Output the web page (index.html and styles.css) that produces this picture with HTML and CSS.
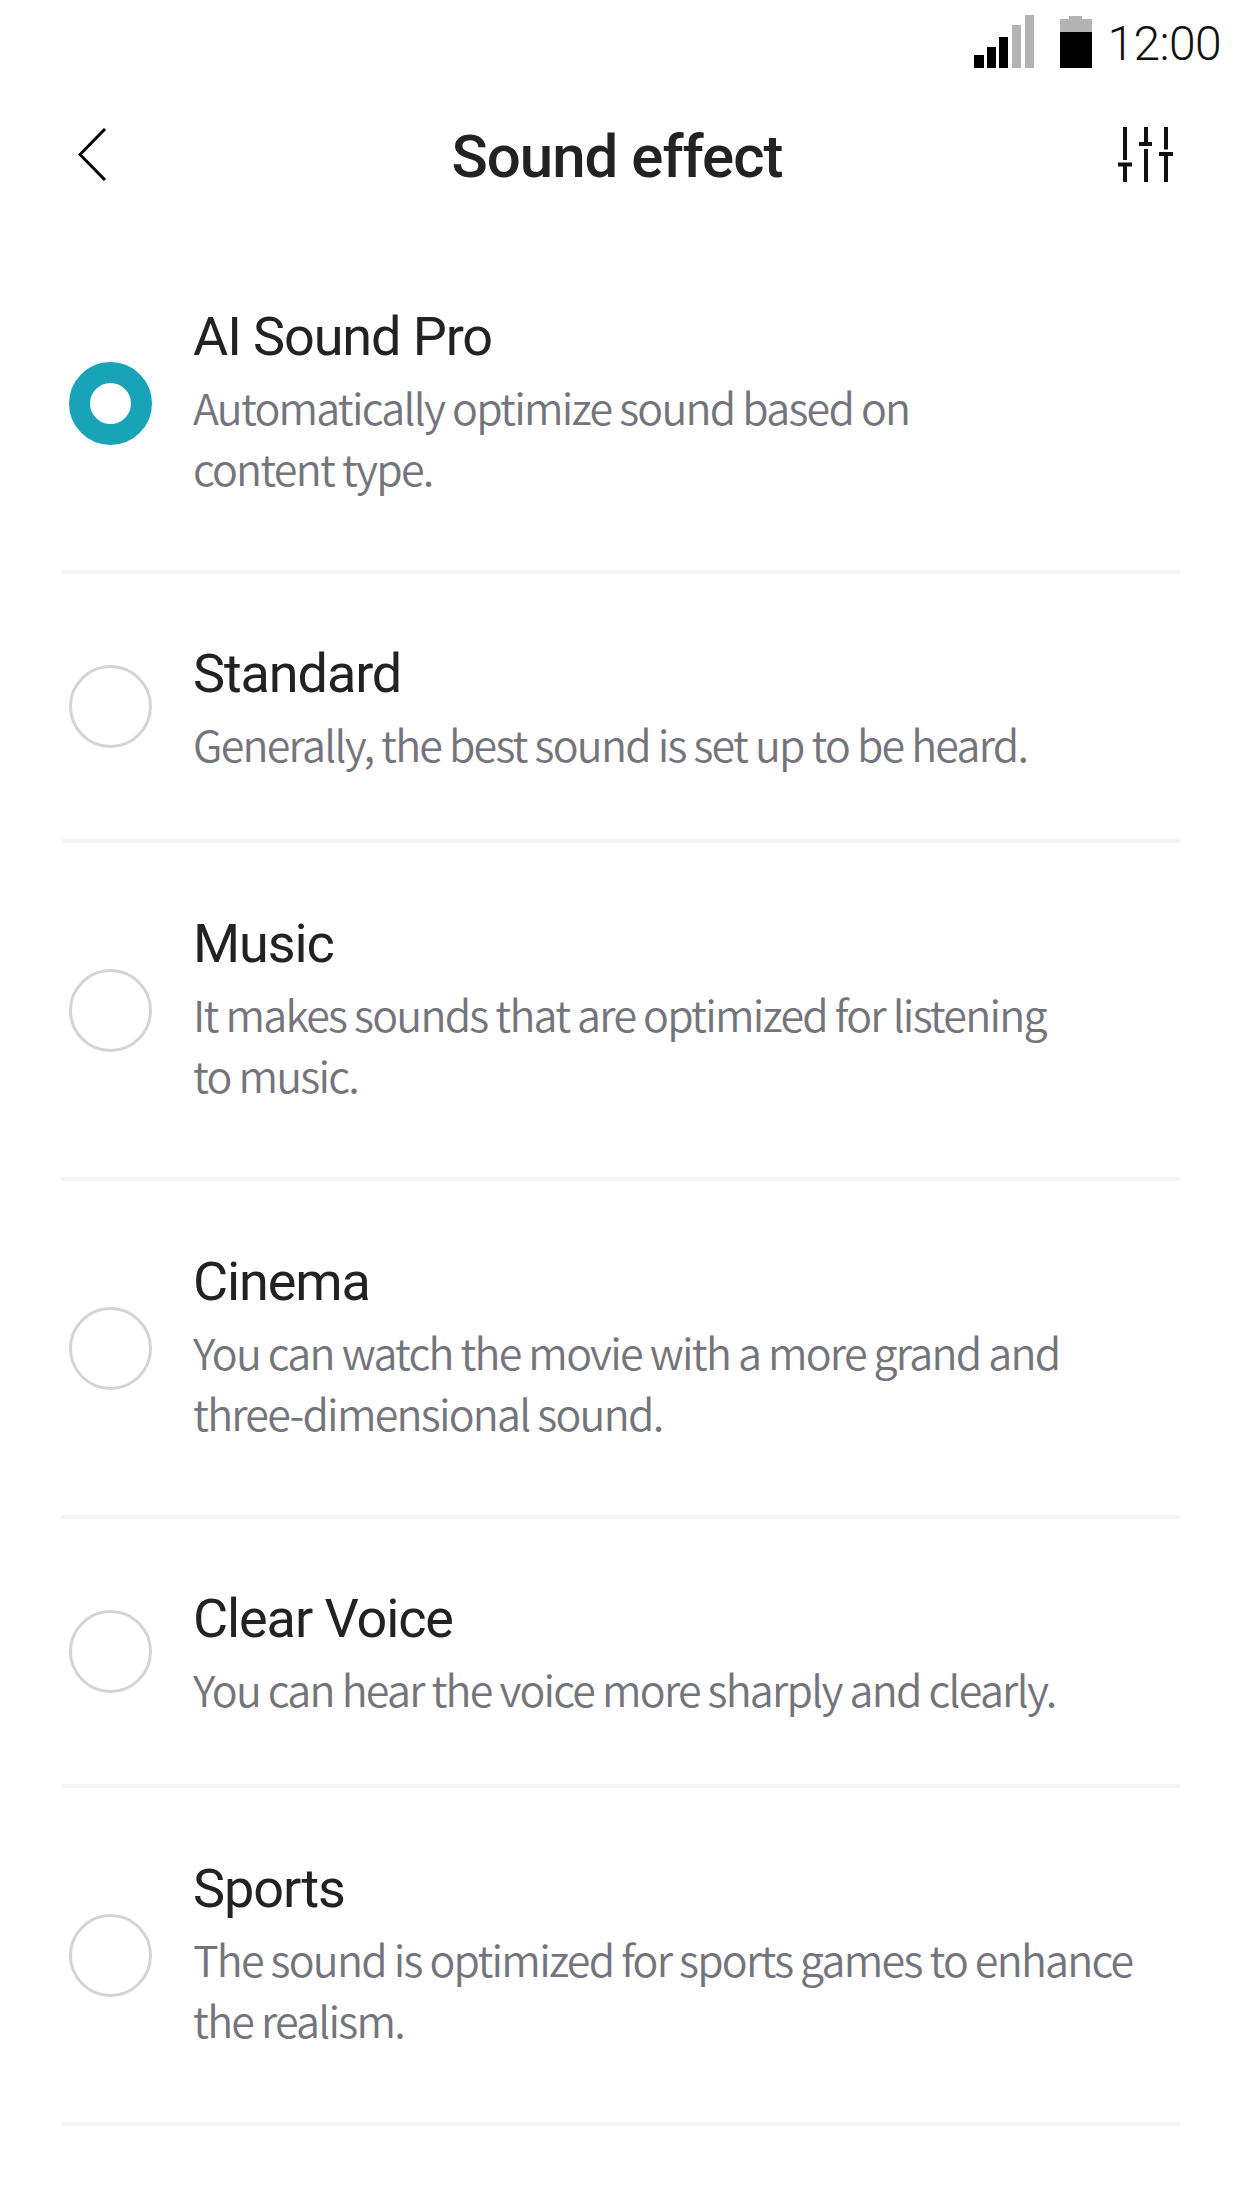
FILE: index.html
```html
<!DOCTYPE html>
<html lang="en">
<head>
    <meta charset="UTF-8">
    <meta name="viewport" content="width=device-width, initial-scale=1.0">
    <title>Sound effect</title>
    <link rel="stylesheet" href="styles.css">
</head>
<body>
    <div class="status-bar">
        <svg class="signal-icon" width="60" height="53" viewBox="0 0 60 53">
            <rect x="0" y="40" width="10" height="13" fill="#000"/>
            <rect x="13" y="32" width="9" height="21" fill="#000"/>
            <rect x="25" y="22" width="9" height="31" fill="#000"/>
            <rect x="38" y="10" width="9" height="43" fill="#b3b3b3"/>
            <rect x="51" y="0" width="9" height="53" fill="#b3b3b3"/>
        </svg>
        <svg class="battery-icon" width="32" height="52" viewBox="0 0 32 52">
            <rect x="9" y="0" width="13" height="4" fill="#b3b3b3"/>
            <rect x="0" y="3" width="32" height="14" fill="#b3b3b3"/>
            <rect x="0" y="16" width="32" height="36" fill="#000"/>
        </svg>
        <span class="clock">12:00</span>
    </div>

    <div class="header">
        <svg class="back-icon" width="29" height="53" viewBox="0 0 29 53">
            <path d="M27 1 L2 26.5 L27 52" fill="none" stroke="#000" stroke-width="3"/>
        </svg>
        <h1>Sound effect</h1>
        <svg class="eq-icon" width="55" height="55" viewBox="0 0 55 55">
            <path d="M7 0V33M0 37.5H14M7 37.5V55M28 0V17M21 17H34M28 22V55M48 0V22.5M41 27H55M48 27V55" fill="none" stroke="#111" stroke-width="4"/>
        </svg>
    </div>

    <div class="list">
        <div class="row two-line">
            <div class="radio selected"></div>
            <div class="row-text">
                <div class="row-title">AI Sound Pro</div>
                <div class="row-desc">Automatically optimize sound based on<br>content type.</div>
            </div>
        </div>
        <div class="row">
            <div class="radio"></div>
            <div class="row-text">
                <div class="row-title">Standard</div>
                <div class="row-desc">Generally, the best sound is set up to be heard.</div>
            </div>
        </div>
        <div class="row two-line">
            <div class="radio"></div>
            <div class="row-text">
                <div class="row-title">Music</div>
                <div class="row-desc">It makes sounds that are optimized for listening<br>to music.</div>
            </div>
        </div>
        <div class="row two-line">
            <div class="radio"></div>
            <div class="row-text">
                <div class="row-title">Cinema</div>
                <div class="row-desc">You can watch the movie with a more grand and<br>three-dimensional sound.</div>
            </div>
        </div>
        <div class="row">
            <div class="radio"></div>
            <div class="row-text">
                <div class="row-title">Clear Voice</div>
                <div class="row-desc">You can hear the voice more sharply and clearly.</div>
            </div>
        </div>
        <div class="row two-line">
            <div class="radio"></div>
            <div class="row-text">
                <div class="row-title">Sports</div>
                <div class="row-desc">The sound is optimized for sports games to enhance<br>the realism.</div>
            </div>
        </div>
    </div>
</body>
</html>
```

FILE: styles.css
```css
body {
    margin: 0;
    background-color: #fff;
    font-family: Roboto, sans-serif;
    color: #222;
}
.status-bar {
    display: flex;
    justify-content: flex-end;
    align-items: flex-end;
    height: 68px;
    padding-right: 21px;
}
.signal-icon {
    margin-right: 26px;
}
.battery-icon {
    margin-right: 15px;
}
.clock {
    font-size: 48px;
    font-weight: 300;
    line-height: 48px;
    letter-spacing: -0.6px;
    color: #111;
}
.header {
    display: flex;
    align-items: center;
    justify-content: space-between;
    height: 120px;
    padding: 0 69px 0 78px;
    margin-top: 26px;
}
.header h1 {
    margin: 5px 0 0 9px;
    font-size: 60px;
    font-weight: 500;
    letter-spacing: -1px;
}
.list {
    margin: 22px 62px 0;
}
.row {
    display: flex;
    align-items: center;
    height: 265px;
    border-bottom: 4px solid #f4f4f4;
}
.row.two-line {
    height: 334px;
}
.radio {
    flex: none;
    box-sizing: border-box;
    width: 83px;
    height: 83px;
    margin-left: 7px;
    border: 3px solid #d4d4d4;
    border-radius: 50%;
}
.radio.selected {
    border: 21px solid #19a3b9;
}
.row-text {
    margin-left: 41px;
}
.two-line .row-text {
    padding-bottom: 6px;
}
.row-title {
    font-size: 54px;
    line-height: 68px;
    letter-spacing: -1.1px;
    color: #222;
}
.row-desc {
    font-family: "Noto Sans CJK KR", sans-serif;
    font-size: 43px;
    font-weight: 350;
    line-height: 61px;
    letter-spacing: -1.77px;
    margin-top: 5px;
    color: #74757c;
}
```
